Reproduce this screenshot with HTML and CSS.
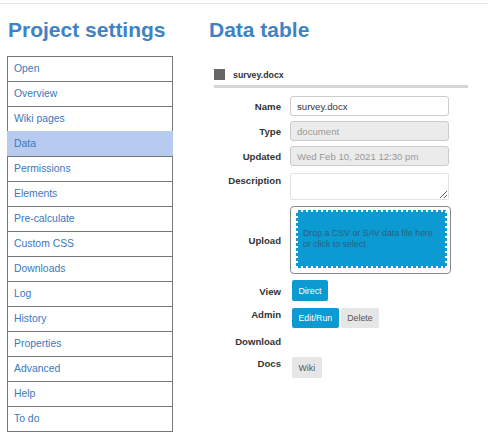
FILE: index.html
```html
<!DOCTYPE html>
<html lang="en">
<head>
    <meta charset="UTF-8">
    <title>Project settings - Data table</title>
    <link rel="stylesheet" href="styles.css">
</head>
<body>
    <div class="topbar"></div>
    <div class="layout">
        <div class="sidebar">
            <h1>Project settings</h1>
            <ul class="nav">
                <li>Open</li>
                <li>Overview</li>
                <li>Wiki pages</li>
                <li class="active">Data</li>
                <li>Permissions</li>
                <li>Elements</li>
                <li>Pre-calculate</li>
                <li>Custom CSS</li>
                <li>Downloads</li>
                <li>Log</li>
                <li>History</li>
                <li>Properties</li>
                <li>Advanced</li>
                <li>Help</li>
                <li>To do</li>
            </ul>
        </div>

        <div class="main">
            <h1>Data table</h1>
            <div class="data-panel">
                <div class="file-head">
                    <span class="file-icon"></span>
                    <span class="file-name">survey.docx</span>
                </div>

                <div class="form">
                    <div class="row">
                        <label>Name</label>
                        <input type="text" value="survey.docx">
                    </div>
                    <div class="row">
                        <label>Type</label>
                        <input type="text" value="document" disabled>
                    </div>
                    <div class="row row-gap">
                        <label>Updated</label>
                        <input type="text" value="Wed Feb 10, 2021 12:30 pm" disabled>
                    </div>
                    <div class="row row-wide">
                        <label class="label-top">Description</label>
                        <textarea></textarea>
                    </div>
                    <div class="row row-wide row-center">
                        <label class="label-flat">Upload</label>
                        <div class="dropzone">
                            <div class="drop-inner">Drop a CSV or SAV data file here<br>or click to select</div>
                        </div>
                    </div>
                    <div class="row row-gap">
                        <label class="label-view">View</label>
                        <div class="buttons">
                            <button class="btn btn-primary btn-tall">Direct</button>
                        </div>
                    </div>
                    <div class="row row-gap">
                        <label class="label-flat">Admin</label>
                        <div class="buttons">
                            <button class="btn btn-primary">Edit/Run</button>
                            <button class="btn btn-light">Delete</button>
                        </div>
                    </div>
                    <div class="row">
                        <label class="label-flat">Download</label>
                    </div>
                    <div class="row">
                        <label class="label-docs">Docs</label>
                        <div class="buttons buttons-low">
                            <button class="btn btn-light btn-tall">Wiki</button>
                        </div>
                    </div>
                </div>
            </div>
        </div>
    </div>
</body>
</html>
```

FILE: styles.css
```css
* {
    box-sizing: border-box;
    margin: 0;
    padding: 0;
}

body {
    font-family: "Liberation Sans", Arial, sans-serif;
    background-color: #fff;
    color: #333;
}

.topbar {
    height: 4px;
    border-bottom: 1px solid #e8e8e8;
}

.layout {
    display: flex;
    gap: 35px;
    padding-left: 7px;
}

h1 {
    font-size: 21px;
    line-height: 24px;
    font-weight: bold;
    color: #3f82c6;
    margin: 14px 0 14px 1px;
}

.sidebar {
    width: 166px;
}

.nav {
    list-style: none;
    border-bottom: 1px solid #777;
}

.nav li {
    height: 25px;
    line-height: 24px;
    border: 1px solid #777;
    border-bottom: 0;
    padding-left: 6px;
    font-size: 10.4px;
    color: #3a78c0;
}

.nav li.active {
    background-color: #b7cbf0;
    border-color: #b7cbf0;
}

.main {
    flex: 1;
}

.data-panel {
    padding-top: 8px;
    margin-left: 6px;
    width: 254px;
}

.file-head {
    display: flex;
    align-items: center;
    height: 24px;
    border-bottom: 3px solid #d6d6d6;
}

.file-icon {
    width: 11px;
    height: 11px;
    background-color: #666;
    margin-right: 8px;
}

.file-name {
    font-size: 8.8px;
    font-weight: bold;
    color: #333;
}

.form {
    margin-top: 8px;
}

.row {
    display: flex;
    align-items: flex-start;
    margin-bottom: 5px;
}

.row-gap {
    margin-bottom: 7px;
}

.row-wide {
    margin-bottom: 6px;
}

.row-center {
    align-items: center;
}

.row label {
    width: 67px;
    margin-right: 9px;
    text-align: right;
    font-size: 9.6px;
    font-weight: bold;
    line-height: 13px;
    padding-top: 4px;
    color: #333;
}

.row .label-top {
    padding-top: 1px;
}

.row .label-flat {
    padding-top: 0;
}

.row .label-view {
    padding-top: 5px;
}

.row .label-docs {
    padding-top: 3.5px;
}

input, textarea {
    font-family: inherit;
    width: 159px;
    border: 1px solid #ccc;
    border-radius: 3px;
    font-size: 9.6px;
    color: #333;
    background-color: #fff;
}

input {
    height: 20px;
    padding: 0 6px;
}

input:disabled {
    background-color: #ebebeb;
    color: #999;
}

textarea {
    height: 27px;
    border-color: #e2e2e2;
    border-radius: 2px;
    padding: 3px 6px;
}

.dropzone {
    width: 161px;
    height: 68px;
    border: 1px solid #888;
    border-radius: 4px;
    padding: 3px 3px 5px 5px;
}

.drop-inner {
    height: 100%;
    display: flex;
    align-items: center;
    padding: 0 7px;
    font-size: 8.8px;
    line-height: 11px;
    color: #2e5e80;
    background:
        repeating-linear-gradient(90deg, #fff 0 2px, transparent 2px 5px) top / 100% 2px no-repeat,
        repeating-linear-gradient(90deg, #fff 0 2px, transparent 2px 5px) bottom / 100% 2px no-repeat,
        repeating-linear-gradient(0deg, #fff 0 2px, transparent 2px 5px) left / 2px 100% no-repeat,
        repeating-linear-gradient(0deg, #fff 0 2px, transparent 2px 5px) right / 2px 100% no-repeat,
        #0b9ad1;
}

.buttons {
    display: flex;
    gap: 2px;
    margin-left: 2px;
}

.buttons-low {
    margin-top: 4px;
}

.btn {
    font-family: inherit;
    font-size: 8.8px;
    height: 20px;
    padding: 0 6.5px;
    border: none;
    border-radius: 2px;
    cursor: pointer;
}

.btn-tall {
    height: 21px;
}

.btn-primary {
    background-color: #0b9ad1;
    color: #fff;
}

.btn-light {
    background-color: #e6e6e6;
    color: #555;
}
```
